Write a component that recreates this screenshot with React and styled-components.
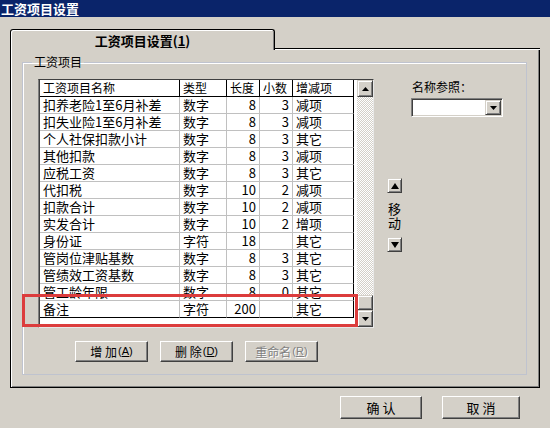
import React from 'react';
import styled, { createGlobalStyle } from 'styled-components';

const Global = createGlobalStyle`
  html, body { margin: 0; padding: 0; background: #d4d0c8; }
  body { font-family: "Noto Sans CJK SC", "Noto Sans", sans-serif; color: #000; }
  * { box-sizing: border-box; }
`;

const Window = styled.div`
  width: 550px;
  height: 428px;
  display: flex;
  flex-direction: column;
  overflow: hidden;
  background: #d4d0c8;
`;

const TitleBar = styled.div`
  height: 17px;
  background: #0a246a;
  color: #fff;
  font-weight: bold;
  font-size: 13px;
  line-height: 17px;
  padding-left: 1px;
`;

const Content = styled.div`
  padding: 12px 10px 0 10px;
  display: flex;
  flex-direction: column;
`;

const TabRow = styled.div`
  display: flex;
  height: 21px;
`;

const Tab = styled.div`
  width: 265px;
  height: 21px;
  border: 1px solid #000;
  border-bottom: none;
  border-radius: 3px 3px 0 0;
  box-shadow: inset 1px 1px 0 #fff, inset -1px 0 0 #808080;
  display: flex;
  align-items: center;
  justify-content: center;
  font-weight: bold;
  font-size: 13px;
  line-height: 17px;
  padding-top: 1px;
`;

const TabFiller = styled.div`
  flex: 1;
  background: linear-gradient(to top, #fff 0 1px, #000 1px 2px, transparent 2px);
`;

const Panel = styled.div`
  height: 338px;
  border: 1px solid #000;
  border-top: none;
  box-shadow: inset 1px 0 0 #fff, inset -1px -1px 0 #808080;
  display: flex;
  flex-direction: column;
`;

const Group = styled.fieldset`
  flex: 1;
  margin: 5px 12px 12px 11px;
  padding: 0;
  border: 1px solid #bfc3cf;
  box-shadow: inset 1px 1px 0 #fff;
  min-width: 0;
`;

const GroupLabel = styled.legend`
  margin-left: 9px;
  padding: 0 2px;
  font-size: 12px;
  line-height: 14px;
`;

const GroupInner = styled.div`
  display: flex;
  padding: 10px 0 0 15px;
`;

const LeftCol = styled.div`
  display: flex;
  flex-direction: column;
`;

const GridWrap = styled.div`
  position: relative;
  width: 336px;
  height: 249px;
`;

const GridFrame = styled.div`
  width: 336px;
  height: 249px;
  border: 1px solid;
  border-color: #404040 #e8e8e8 #e8e8e8 #808080;
  box-shadow: inset 1px 0 0 #404040;
  padding-left: 1px;
  background: #fff;
  display: flex;
`;

const Table = styled.div`
  display: grid;
  grid-template-columns: 140px 47px 33px 33px 61px;
  grid-auto-rows: 17px;
  align-content: start;
  width: 314px;
`;

const Cell = styled.div`
  border-right: 1px solid ${p => (p.$head || p.$lastCol ? '#000' : '#c0c0c0')};
  border-bottom: 1px solid ${p => (p.$head || p.$lastRow ? '#000' : '#c0c0c0')};
  font-size: ${p => (p.$head ? '12px' : '13px')};
  line-height: 16px;
  padding: 0 ${p => (p.$num ? '3px' : '2px')} 0 3px;
  text-align: ${p => (p.$num ? 'right' : 'left')};
  white-space: nowrap;
`;

const Scrollbar = styled.div`
  margin-left: 3px;
  width: 16px;
  display: flex;
  flex-direction: column;
`;

const RaisedBtn = styled.div`
  width: ${p => p.$w || 16}px;
  height: ${p => p.$h || 17}px;
  flex: none;
  background: #d4d0c8;
  border: 1px solid;
  border-color: #d4d0c8 #404040 #404040 #d4d0c8;
  box-shadow: inset 1px 1px 0 #fff, inset -1px -1px 0 #808080;
  display: flex;
  align-items: center;
  justify-content: center;
`;

const Track = styled.div`
  flex: 1;
  background: repeating-conic-gradient(#d4d0c8 0% 25%, #fff 0% 50%) 0 0 / 2px 2px;
`;

const Highlight = styled.div`
  position: absolute;
  left: -16px;
  top: 215px;
  width: 336px;
  height: 33px;
  border: 3px solid #dc3c3c;
  pointer-events: none;
`;

const ButtonRow = styled.div`
  display: flex;
  gap: 12px;
  margin-top: 13px;
  padding-left: 37px;
`;

const SmallButton = styled.div`
  width: 73px;
  height: 21px;
  background: #d4d0c8;
  border: 1px solid;
  border-color: #fff #404040 #404040 #fff;
  box-shadow: inset -1px -1px 0 #808080;
  display: flex;
  align-items: center;
  justify-content: center;
  font-size: 12px;
  line-height: 15px;
  color: ${p => (p.$disabled ? '#808080' : '#000')};
  text-shadow: ${p => (p.$disabled ? '1px 1px 0 #fff' : 'none')};
  white-space: pre;
`;

const Acc = styled.span`
  font-size: 11px;
  margin-left: 1px;
  font-family: "Liberation Sans", "Noto Sans", sans-serif;
`;

const MoveCol = styled.div`
  margin-left: 13px;
  padding-top: 99px;
  width: 15px;
  display: flex;
  flex-direction: column;
  align-items: center;
`;

const MoveText = styled.div`
  margin: 9px 0 7px;
  font-size: 13px;
  line-height: 14px;
  width: 13px;
  text-align: center;
`;

const RefCol = styled.div`
  margin-left: 9px;
  padding-top: 1px;
  display: flex;
  flex-direction: column;
`;

const RefLabel = styled.div`
  font-size: 12px;
  line-height: 14px;
  padding-left: 1px;
`;

const Combo = styled.div`
  margin-top: 4px;
  width: 92px;
  height: 19px;
  background: #fff;
  border: 1px solid;
  border-color: #808080 #fff #fff #808080;
  box-shadow: inset 1px 1px 0 #404040, inset -1px -1px 0 #d4d0c8;
  display: flex;
  justify-content: flex-end;
  padding: 1px 1px 1px 0;
`;

const Footer = styled.div`
  display: flex;
  justify-content: flex-end;
  gap: 20px;
  padding: 8px 30px 0 0;
`;

const DlgButton = styled.div`
  width: ${p => p.$w}px;
  height: 23px;
  background: #d4d0c8;
  border: 1px solid;
  border-color: #fff #404040 #404040 #fff;
  box-shadow: inset -1px -1px 0 #808080;
  display: flex;
  align-items: center;
  justify-content: center;
  font-size: 13px;
  line-height: 17px;
  white-space: pre;
`;

const Arrow = ({ dir, w = 7, h = 4 }) => (
  <svg width={w} height={h} viewBox={`0 0 ${w} ${h}`}>
    {dir === 'up' ? (
      <polygon points={`0,${h} ${w / 2},0 ${w},${h}`} fill="#000" />
    ) : (
      <polygon points={`0,0 ${w},0 ${w / 2},${h}`} fill="#000" />
    )}
  </svg>
);

const header = ['工资项目名称', '类型', '长度', '小数', '增减项'];
const rows = [
  ['扣养老险1至6月补差', '数字', '8', '3', '减项'],
  ['扣失业险1至6月补差', '数字', '8', '3', '减项'],
  ['个人社保扣款小计', '数字', '8', '3', '其它'],
  ['其他扣款', '数字', '8', '3', '减项'],
  ['应税工资', '数字', '8', '3', '其它'],
  ['代扣税', '数字', '10', '2', '减项'],
  ['扣款合计', '数字', '10', '2', '减项'],
  ['实发合计', '数字', '10', '2', '增项'],
  ['身份证', '字符', '18', '', '其它'],
  ['管岗位津贴基数', '数字', '8', '3', '其它'],
  ['管绩效工资基数', '数字', '8', '3', '其它'],
  ['管工龄年限', '数字', '8', '0', '其它'],
  ['备注', '字符', '200', '', '其它'],
];

export default function App() {
  return (
    <>
      <Global />
      <Window>
        <TitleBar>工资项目设置</TitleBar>
        <Content>
          <TabRow>
            <Tab>工资项目设置(<u>1</u>)</Tab>
            <TabFiller />
          </TabRow>
          <Panel>
            <Group>
              <GroupLabel>工资项目</GroupLabel>
              <GroupInner>
                <LeftCol>
                  <GridWrap>
                    <GridFrame>
                      <Table>
                        {header.map((h, i) => (
                          <Cell key={'h' + i} $head $lastCol={i === 4}>{h}</Cell>
                        ))}
                        {rows.map((r, ri) =>
                          r.map((c, ci) => (
                            <Cell
                              key={ri + '-' + ci}
                              $num={ci === 2 || ci === 3}
                              $lastCol={ci === 4}
                              $lastRow={ri === rows.length - 1}
                            >
                              {c}
                            </Cell>
                          ))
                        )}
                      </Table>
                      <Scrollbar>
                        <RaisedBtn><Arrow dir="up" /></RaisedBtn>
                        <Track />
                        <RaisedBtn $h={15} />
                        <RaisedBtn><Arrow dir="down" /></RaisedBtn>
                      </Scrollbar>
                    </GridFrame>
                    <Highlight />
                  </GridWrap>
                  <ButtonRow>
                    <SmallButton>增 加<Acc>(<u>A</u>)</Acc></SmallButton>
                    <SmallButton>删 除<Acc>(<u>D</u>)</Acc></SmallButton>
                    <SmallButton $disabled>重命名<Acc>(<u>R</u>)</Acc></SmallButton>
                  </ButtonRow>
                </LeftCol>
                <MoveCol>
                  <RaisedBtn $w={15} $h={15}><Arrow dir="up" w={8} h={6} /></RaisedBtn>
                  <MoveText>移<br />动</MoveText>
                  <RaisedBtn $w={15} $h={15}><Arrow dir="down" w={8} h={6} /></RaisedBtn>
                </MoveCol>
                <RefCol>
                  <RefLabel>名称参照：</RefLabel>
                  <Combo>
                    <RaisedBtn $w={16} $h={15}><Arrow dir="down" /></RaisedBtn>
                  </Combo>
                </RefCol>
              </GroupInner>
            </Group>
          </Panel>
        </Content>
        <Footer>
          <DlgButton $w={82}>确 认</DlgButton>
          <DlgButton $w={78}>取 消</DlgButton>
        </Footer>
      </Window>
    </>
  );
}
